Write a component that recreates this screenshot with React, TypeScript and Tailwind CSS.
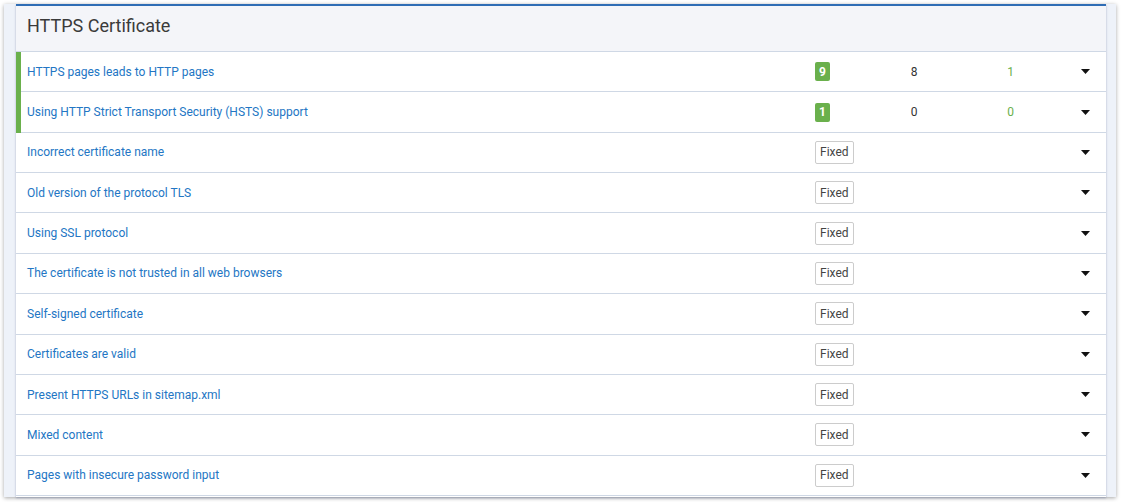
import React from "react";

type Row = { label: string; badge?: string; a?: string; b?: string; marked?: boolean };

const rows: Row[] = [
  { label: "HTTPS pages leads to HTTP pages", badge: "9", a: "8", b: "1", marked: true },
  { label: "Using HTTP Strict Transport Security (HSTS) support", badge: "1", a: "0", b: "0", marked: true },
  { label: "Incorrect certificate name" },
  { label: "Old version of the protocol TLS" },
  { label: "Using SSL protocol" },
  { label: "The certificate is not trusted in all web browsers" },
  { label: "Self-signed certificate" },
  { label: "Certificates are valid" },
  { label: "Present HTTPS URLs in sitemap.xml" },
  { label: "Mixed content" },
  { label: "Pages with insecure password input" },
];

function Caret() {
  return (
    <svg width="9" height="5" viewBox="0 0 9 5" className="block">
      <path d="M0 0 H9 L4.5 5 Z" fill="#111" />
    </svg>
  );
}

export default function App() {
  return (
    <div
      className="w-[1121px] h-[502px] bg-white overflow-hidden"
      style={{ fontFamily: "Roboto, 'Noto Sans', sans-serif" }}
    >
      <div className="ml-[4px] mr-[5px] mt-[4px] h-[493px] bg-[#eef2f9] shadow-[0_1px_4px_rgba(0,0,0,0.35)] pl-[12px] pr-[10px]">
        <div className="h-full bg-white border-t-2 border-[#2f6db5] flex flex-col shadow-[0_1px_2px_rgba(120,130,160,0.6)]">
          <div className="h-[46px] shrink-0 bg-[#f4f5f9] border-b border-[#cfd8e5] flex items-start pt-[9px] pl-[11px]">
            <span className="text-[18px] leading-[22px] text-[#3a3a3a]">HTTPS Certificate</span>
          </div>
          {rows.map((r, i) => (
            <div
              key={i}
              className="h-[40.36px] shrink-0 border-b border-[#cfd8e5] flex items-center relative"
            >
              {r.marked && <div className="absolute left-0 top-0 bottom-[-1px] w-[5px] bg-[#6ab04c]" />}
              <div className="w-[799px] pl-[11px] text-[12px] text-[#2376c4] truncate">{r.label}</div>
              <div className="w-[60px] flex">
                {r.badge ? (
                  <span className="h-[19px] px-[4px] rounded-[2px] bg-[#6ab04c] text-white text-[12px] font-bold flex items-center justify-center">
                    {r.badge}
                  </span>
                ) : (
                  <span className="h-[23px] px-[4px] border border-[#cccccc] rounded-[2px] text-[12px] text-[#444] flex items-center">
                    Fixed
                  </span>
                )}
              </div>
              <div className="w-[78px] text-center text-[12px] text-[#333]">{r.a ?? ""}</div>
              <div className="w-[115px] text-center text-[12px] text-[#6ab04c]">{r.b ?? ""}</div>
              <div className="w-[34px] flex justify-center">
                <Caret />
              </div>
            </div>
          ))}
        </div>
      </div>
    </div>
  );
}
